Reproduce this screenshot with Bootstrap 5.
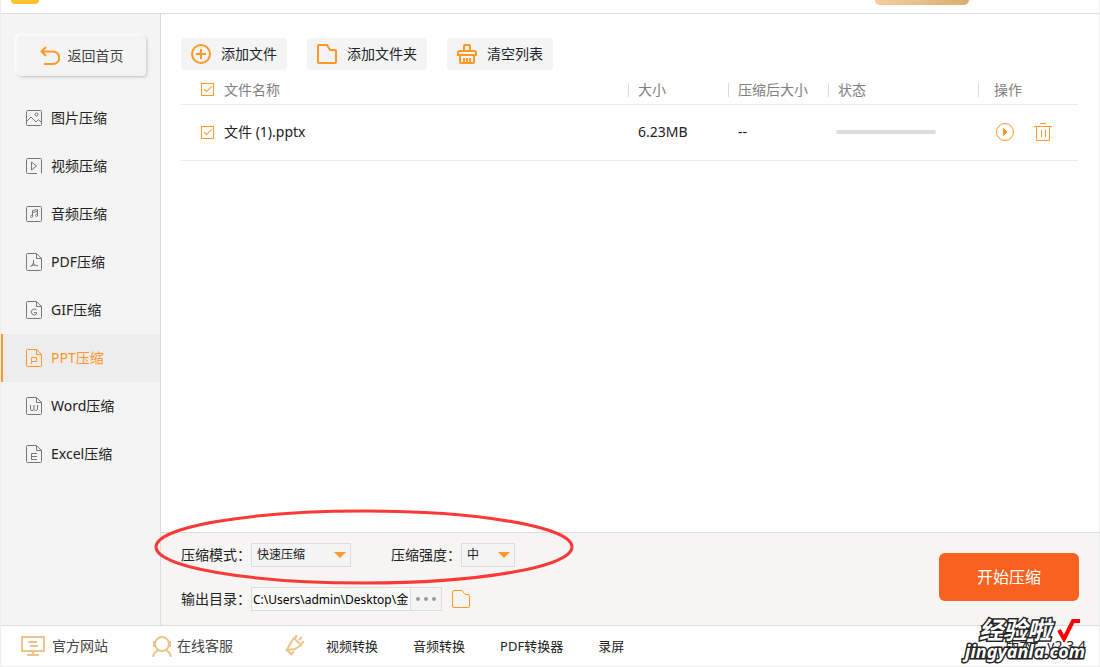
<!DOCTYPE html>
<html lang="zh-CN">
<head>
<meta charset="utf-8">
<meta name="viewport" content="width=device-width, initial-scale=1">
<title>PPT压缩</title>
<link href="https://cdn.jsdelivr.net/npm/bootstrap@5.3.0/dist/css/bootstrap.min.css" rel="stylesheet">
<style>
  :root { --accent: #ff9827; --line: #dcdcdc; --soft: #f4f4f4; --gold: #ecc48c; }
  body { font-family: "Noto Sans", "Noto Sans CJK SC", sans-serif; font-size: 14px; line-height: 20px; color: #222; }
  svg { display: block; flex: none; fill: none; }
  button, input, select { font: inherit; color: inherit; }
  .btn { font-size: 14px; line-height: 20px; }
  .app { border: 1px solid #eee; border-top: 0; }
  .titlebar { height: 14px; border-bottom: 1px solid var(--line); padding: 0 130px 0 10px; }
  .app-logo { width: 28px; height: 4px; border-radius: 0 0 8px 8px; background: #ffc233; }
  .vip { width: 94px; height: 5px; border-radius: 0 0 24px 24px; background: linear-gradient(90deg, #f3cd9c, #d9ae70); }
  .side { width: 160px; background: var(--soft); border-right: 1px solid var(--line); }
  .btn-home { height: 40px; margin: 22px 14px 18px 16px; color: #444; background: var(--soft); border-radius: 4px; box-shadow: 1px 1px 3px #0003, -2px -2px 2px #fff; }
  .side-item { height: 48px; padding: 0 24px 0 22px; gap: 8px; color: #222; text-decoration: none; border-left: 2px solid transparent; }
  .side-item svg { stroke: #777; }
  .side-item.current { color: var(--accent); background: #ededed; border-color: var(--accent); }
  .side-item.current svg { stroke: var(--accent); }
  .content-area { padding: 24px 21px 0 20px; }
  .btn-tool { height: 32px; padding: 0 10px; gap: 10px; background: var(--soft); border-radius: 4px; }
  .btn-tool svg, .row-btn svg { stroke: var(--accent); }
  .files { width: 100%; table-layout: fixed; }
  .files th { height: 34px; padding: 6px 0 0; font-weight: 400; color: #808080; border-bottom: 1px solid #ebebeb; }
  .files td { height: 56px; padding: 0; border-bottom: 1px solid #ebebeb; }
  .files th span.sep { display: block; line-height: 14px; border-left: 1px solid var(--line); padding-left: 9px; }
  .files .act span.sep { padding-left: 15px; }
  .files td + td { padding-left: 10px; }
  .files td.state { padding-left: 8px; }
  .files td.act { padding-left: 17px; }
  .tick { appearance: none; width: 13px; height: 13px; margin: 0; border: 1px solid var(--accent); display: grid; place-items: center; }
  .tick:checked::before { content: ""; width: 8px; height: 4px; margin-top: -3px; border: solid var(--accent); border-width: 0 0 1px 1px; transform: rotate(-45deg); }
  .pick { gap: 10px; padding-left: 20px; }
  .bar { width: 100px; height: 4px; border-radius: 2px; background: #ddd; --bs-progress-bar-bg: #ff9827; }
  .options { background: #f6f5f4; border-top: 1px solid var(--line); padding: 10px 20px 14px; }
  .field { height: 24px; border: 1px solid var(--line); background: var(--soft); border-radius: 0; }
  .pull { appearance: none; padding: 0 24px 0 5px; font-size: 12px; width: 100%; }
  .pull-box svg { position: absolute; right: 5px; top: 8px; fill: var(--accent); pointer-events: none; }
  .mode { width: 100px; }
  .level { width: 54px; }
  .path { width: 160px; padding: 0 0 0 1px; font-size: 12px; background: #f9f9f9; color: #000; }
  .dots { width: 31px; border-left: 0; padding: 0; }
  .dots svg { fill: #999; }
  .btn-start { width: 140px; height: 48px; font-size: 16px; color: #fff; background: #f9611e; border-radius: 6px; }
  .ring { position: absolute; left: -8px; top: -25px; pointer-events: none; }
  .foot { height: 41px; border-top: 1px solid var(--line); padding: 0 13px 0 20px; }
  .foot a { color: #444; text-decoration: none; }
  .foot a.tool { font-size: 13px; color: #222; }
  .foot svg { stroke: var(--gold); }
  .stamp { position: absolute; right: 14px; bottom: 6px; color: #fff; font: italic 700 18px/18px "Noto Sans", "Noto Sans CJK SC", sans-serif; -webkit-text-stroke: 3px #222; paint-order: stroke fill; pointer-events: none; }
  .stamp-top { font-size: 24px; line-height: 24px; gap: 6px; padding-left: 14px; }
</style>
</head>
<body>
<div class="app d-flex flex-column vh-100 position-relative">
  <header class="titlebar d-flex justify-content-between">
    <div class="app-logo"></div><div class="vip"></div>
  </header>
  <div class="d-flex flex-grow-1">
    <aside class="side d-flex flex-column flex-shrink-0">
      <button class="btn-home btn border-0 p-0 d-flex align-items-center justify-content-center gap-2">
        <svg width="20" height="20" stroke="#ff9827" stroke-width="2"><path d="M6 1 1.500 5.500 6 10M2 5.500h11a6 6 0 0 1 0 12.500H4"/></svg>返回首页</button>
      <nav class="d-flex flex-column">
        <a href="#" class="side-item d-flex align-items-center"><svg width="18" height="18"><rect x="1.500" y="1.500" width="15" height="15" rx="1"/><circle cx="11.500" cy="5.500" r="1.500"/><path d="m2 12 4-4 5 5 2.500-2.500L16 13"/></svg>图片压缩</a>
        <a href="#" class="side-item d-flex align-items-center"><svg width="18" height="18"><path d="M12 16.500H2.500a1 1 0 0 1-1-1v-13a1 1 0 0 1 1-1h13a1 1 0 0 1 1 1v14M6.500 5v8l5-4z"/></svg>视频压缩</a>
        <a href="#" class="side-item d-flex align-items-center"><svg width="18" height="18"><rect x="1.500" y="1.500" width="15" height="15" rx="1"/><path d="M7.500 11.500v-6l5-1v6M7.500 7.500l5-1"/><circle cx="6.500" cy="11.500" r="1"/><circle cx="11.500" cy="10.500" r="1"/></svg>音频压缩</a>
        <a href="#" class="side-item d-flex align-items-center"><svg width="18" height="20"><path d="M11.500 1.500h-9a1 1 0 0 0-1 1v15a1 1 0 0 0 1 1h13a1 1 0 0 0 1-1V6.500zv5h5M8.500 8v3l-3 4M8.500 11l1 2 3.500 1M7 13.500l2.500-.5"/></svg>PDF压缩</a>
        <a href="#" class="side-item d-flex align-items-center"><svg width="18" height="20"><path d="M11.500 1.500h-9a1 1 0 0 0-1 1v15a1 1 0 0 0 1 1h13a1 1 0 0 0 1-1V6.500zv5h5M11.500 10a3 3 0 1 0 0 4v-1.500H9"/></svg>GIF压缩</a>
        <a href="#" class="side-item current d-flex align-items-center" aria-current="page"><svg width="18" height="20"><path d="M11.500 1.500h-9a1 1 0 0 0-1 1v15a1 1 0 0 0 1 1h13a1 1 0 0 0 1-1V6.500zv5h5M6.500 16V9.500h5v4h-5"/></svg>PPT压缩</a>
        <a href="#" class="side-item d-flex align-items-center"><svg width="18" height="20"><path d="M11.500 1.500h-9a1 1 0 0 0-1 1v15a1 1 0 0 0 1 1h13a1 1 0 0 0 1-1V6.500zv5h5M5.500 9v4.500q0 1 1.500 1t2-1V9m0 4.500q.5 1 1.500 1t2-1V9"/></svg>Word压缩</a>
        <a href="#" class="side-item d-flex align-items-center"><svg width="18" height="20"><path d="M11.500 1.500h-9a1 1 0 0 0-1 1v15a1 1 0 0 0 1 1h13a1 1 0 0 0 1-1V6.500zv5h5M12 9.500H6.500v6H12M6.500 12.500H12"/></svg>Excel压缩</a>
      </nav>
    </aside>
    <main class="d-flex flex-column flex-grow-1">
      <section class="content-area flex-grow-1">
        <div class="d-flex" style="gap:20px">
          <button class="btn-tool btn border-0 d-flex align-items-center"><svg width="20" height="20" stroke-width="2"><circle cx="10" cy="10" r="9"/><path d="M10 5v10M5 10h10"/></svg>添加文件</button>
          <button class="btn-tool btn border-0 d-flex align-items-center"><svg width="20" height="20" stroke-width="2"><path d="M1 2a1 1 0 0 1 1-1h8l3 5h5a1 1 0 0 1 1 1v11a1 1 0 0 1-1 1H2a1 1 0 0 1-1-1z"/></svg>添加文件夹</button>
          <button class="btn-tool btn border-0 d-flex align-items-center"><svg width="20" height="20" stroke-width="2"><path d="M7 7V2a1 1 0 0 1 1-1h4a1 1 0 0 1 1 1v5M3 7h14a2 2 0 0 1 2 2v2H1V9a2 2 0 0 1 2-2zM3 11v7a1 1 0 0 0 1 1h12a1 1 0 0 0 1-1v-7M7 14v5M10 14v5M13 14v5"/></svg>清空列表</button>
        </div>
        <table class="files">
          <colgroup><col><col style="width:100px"><col style="width:100px"><col style="width:150px"><col style="width:100px"></colgroup>
          <thead><tr>
            <th scope="col"><label class="pick d-flex align-items-center"><input class="tick" type="checkbox" checked>文件名称</label></th>
            <th scope="col"><span class="sep">大小</span></th><th scope="col"><span class="sep">压缩后大小</span></th><th scope="col"><span class="sep">状态</span></th><th scope="col" class="act"><span class="sep">操作</span></th>
          </tr></thead>
          <tbody><tr>
            <td><label class="pick d-flex align-items-center"><input class="tick" type="checkbox" checked>文件 (1).pptx</label></td>
            <td>6.23MB</td><td>--</td>
            <td class="state"><div class="bar progress" role="progressbar" aria-label="状态" aria-valuenow="0" aria-valuemin="0" aria-valuemax="100"><div class="progress-bar" style="width:0%"></div></div></td>
            <td class="act"><div class="d-flex" style="gap:18px">
              <button class="row-btn btn border-0 p-0" aria-label="开始"><svg width="20" height="20"><circle cx="10" cy="10" r="8.500"/><path d="M8.500 6.500v7l3.500-3.500z" fill="#ff9827"/></svg></button>
              <button class="row-btn btn border-0 p-0" aria-label="删除"><svg width="20" height="20"><path d="M1 4.500h18M7 1.500h6M3.500 4.500v14h13v-14M8.500 8v7M12.500 8v7"/></svg></button>
            </div></td>
          </tr></tbody>
        </table>
      </section>
      <section class="options position-relative d-flex align-items-center justify-content-between">
        <div class="d-flex flex-column" style="gap:20px">
          <div class="d-flex align-items-center">
            <label for="mode">压缩模式：</label>
            <div class="pull-box mode position-relative"><select id="mode" class="field pull d-block"><option>快速压缩</option></select><svg width="12" height="7"><path d="M0 1h12L6 7z"/></svg></div>
            <label for="level" style="margin-left:40px">压缩强度：</label>
            <div class="pull-box level position-relative"><select id="level" class="field pull d-block"><option>中</option></select><svg width="12" height="7"><path d="M0 1h12L6 7z"/></svg></div>
          </div>
          <div class="d-flex align-items-center">
            <label for="out">输出目录：</label>
            <input id="out" class="field path" type="text" value="C:\Users\admin\Desktop\金">
            <button class="field dots d-flex align-items-center justify-content-center" aria-label="浏览"><svg width="20" height="4"><circle cx="2" cy="2" r="2"/><circle cx="10" cy="2" r="2"/><circle cx="18" cy="2" r="2"/></svg></button>
            <button class="btn border-0 p-0" style="margin-left:10px" aria-label="打开目录"><svg width="18" height="18" stroke="#ff9827"><path d="M.5 2q0-1.500 1.500-1.500h8l3 4h3q1.500 0 1.500 1.500v10q0 1.500-1.500 1.500H2Q.5 17.500.5 16z"/></svg></button>
          </div>
        </div>
        <button class="btn-start btn border-0 p-0">开始压缩</button>
        <svg class="ring" width="422" height="78" stroke="#f93a37" stroke-width="3"><ellipse cx="211" cy="39" rx="208" ry="36"/></svg>
      </section>
    </main>
  </div>
  <footer class="foot d-flex align-items-center">
    <a href="#" class="d-flex align-items-center" style="gap:7px"><svg width="24" height="20" stroke-width="2"><path d="M1 1h22v14H1zM12 15v4M6 19h12M7 6h9M9 10h8"/></svg>官方网站</a>
    <a href="#" class="d-flex align-items-center" style="margin-left:44px;gap:5px"><svg width="20" height="21" stroke-width="2"><circle cx="10" cy="8" r="7"/><path d="M2 5v6M18 5v6M1 21q1-6 6-7M19 21q-1-6-6-7"/></svg>在线客服</a>
    <svg style="margin-left:51px" width="22" height="22" stroke-width="2"><path d="m6 9 4-6 7 7-6 4-8 1zM2 14l5 5 3-3M5 18l4 1M12 3V0M15 5l3-3M17 8l3-1"/></svg>
    <div class="d-flex" style="margin-left:20px;gap:35px"><a href="#" class="tool">视频转换</a><a href="#" class="tool">音频转换</a><a href="#" class="tool">PDF转换器</a><a href="#" class="tool">录屏</a></div>
    <span class="ms-auto">版本：v2.3.4</span>
  </footer>
  <div class="stamp"><div class="stamp-top d-flex"><span>经验啦</span><svg width="24" height="24" stroke="#f00" stroke-width="4"><path d="m2 12 5 9L16 3h7"/></svg></div>jingyanla.com</div>
</div>
<script src="https://cdn.jsdelivr.net/npm/bootstrap@5.3.0/dist/js/bootstrap.bundle.min.js"></script>
</body>
</html>
